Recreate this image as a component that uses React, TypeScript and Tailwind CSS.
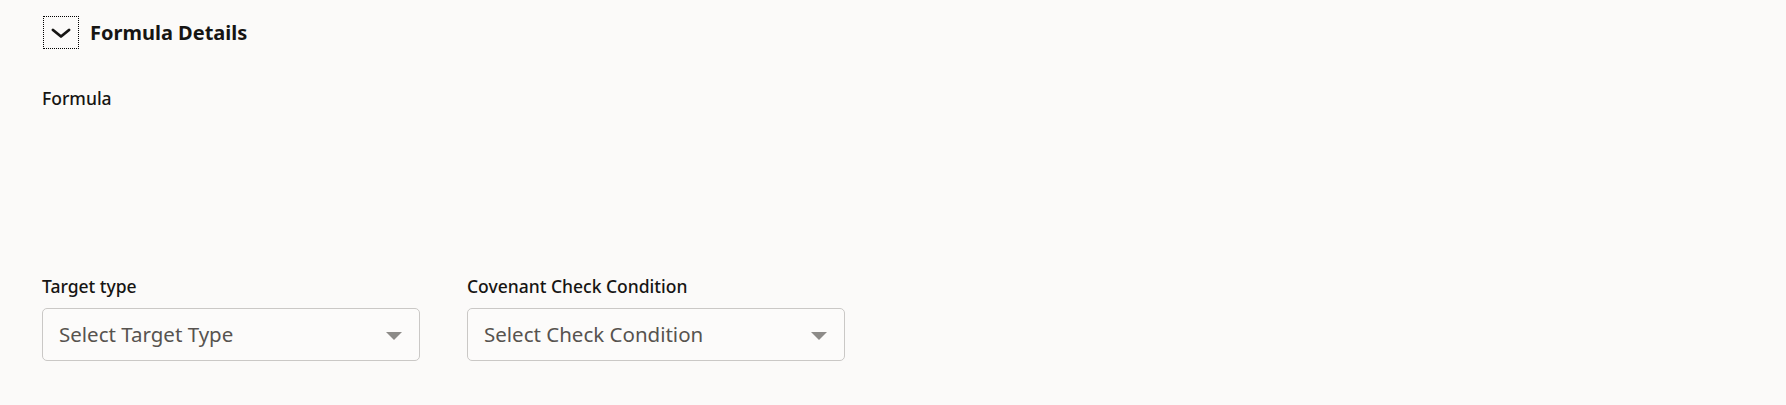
import React from "react";

const FONT = "font-['Noto_Sans',_'Open_Sans',_sans-serif]";

function SelectField({ label, placeholder }: { label: string; placeholder: string }) {
  return (
    <div className="w-[378px]">
      <div className="text-[17.5px] leading-[24px] font-medium text-[#161513]">{label}</div>
      <div className="mt-[10px] h-[53px] flex items-center justify-between rounded-[5px] border border-[#cac8c6] bg-[#fcfbfa] pl-[16px] pr-[17px]">
        <span className="text-[20.5px] text-[#57534f]">{placeholder}</span>
        <svg width="16" height="8" viewBox="0 0 16 8" className="mt-[2px]">
          <path d="M0 0 L16 0 L8 8 Z" fill="#8d8b88" />
        </svg>
      </div>
    </div>
  );
}

export default function App() {
  return (
    <div className={`${FONT} min-h-screen bg-[#fbfaf9] pl-[42px] pt-[16px]`}>
      {/* Section header */}
      <div className="flex items-center">
        <button className="ml-[1px] w-[36px] h-[33px] flex items-center justify-center border border-dotted border-black">
          <svg width="20" height="10" viewBox="0 0 20 10">
            <path d="M2 2 L10 8.5 L18 2" fill="none" stroke="#161513" strokeWidth="2.8" strokeLinecap="round" strokeLinejoin="round" />
          </svg>
        </button>
        <h2 className="ml-[11px] text-[20px] font-bold text-[#161513]">Formula Details</h2>
      </div>

      {/* Formula */}
      <div className="mt-[37px] text-[17.5px] leading-[24px] font-medium text-[#161513]">Formula</div>
      <div className="h-[164px]" />

      {/* Fields */}
      <div className="flex gap-[47px]">
        <SelectField label="Target type" placeholder="Select Target Type" />
        <SelectField label="Covenant Check Condition" placeholder="Select Check Condition" />
      </div>
    </div>
  );
}
